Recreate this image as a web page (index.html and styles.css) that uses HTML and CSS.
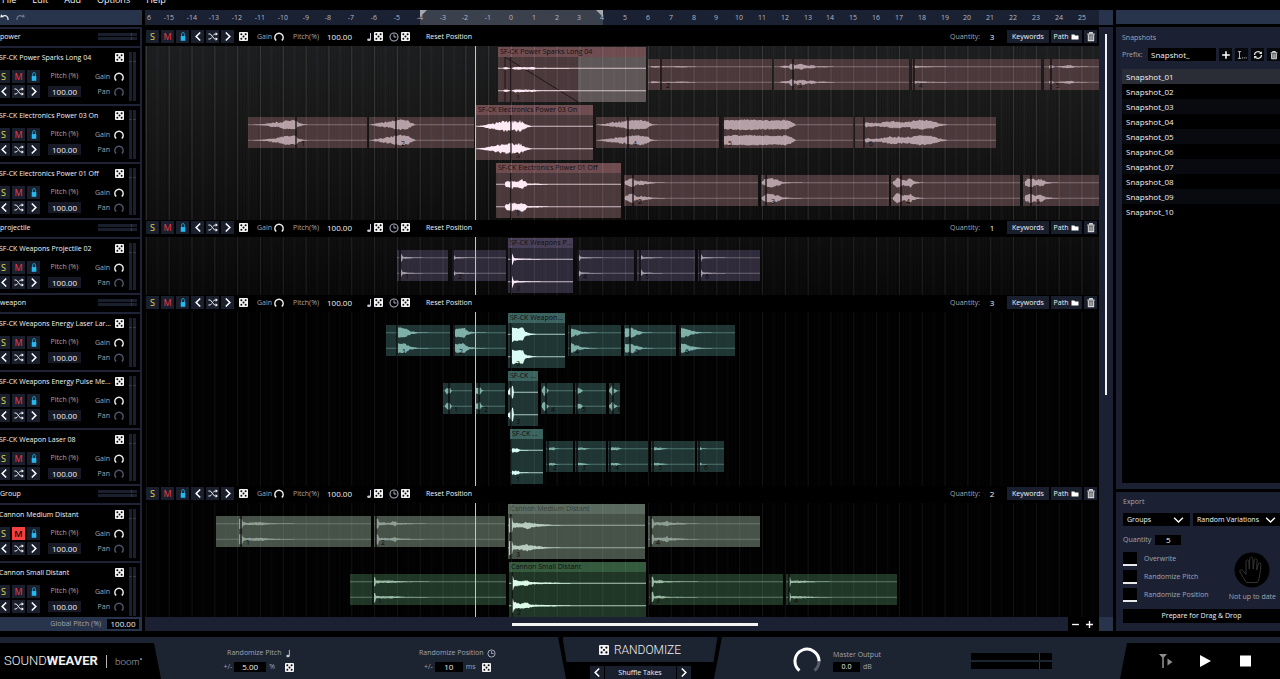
FILE: index.html
```html
<!DOCTYPE html>
<html lang="en">
<head>
<meta charset="utf-8">
<title>SoundWeaver</title>
<link rel="stylesheet" href="styles.css">
</head>
<body>
<svg class="sprite" aria-hidden="true">
  <symbol id="i-dice" viewBox="0 0 10 10"><rect width="10" height="10" rx="1" fill="#f2f2f2"/><g fill="#07080c"><circle cx="2.6" cy="2.6" r="1.1"/><circle cx="7.4" cy="2.6" r="1.1"/><circle cx="5" cy="5" r="1.1"/><circle cx="2.6" cy="7.4" r="1.1"/><circle cx="7.4" cy="7.4" r="1.1"/></g></symbol>
  <symbol id="i-lock" viewBox="0 0 10 12"><path d="M3.500 6V3.200a1.500 1.500 0 0 1 3 0V6" fill="none" stroke="#1f9cc9" stroke-width="1"/><rect x="2.500" y="5.500" width="5" height="5.200" fill="#25b9f0"/></symbol>
  <symbol id="i-prev" viewBox="0 0 10 12"><path d="M7.400 1.600 3 6l4.400 4.400" fill="none" stroke="#fff" stroke-width="1.700"/></symbol>
  <symbol id="i-next" viewBox="0 0 10 12"><path d="M2.600 1.600 7 6l-4.400 4.400" fill="none" stroke="#fff" stroke-width="1.700"/></symbol>
  <symbol id="i-shuffle" viewBox="0 0 12 12"><path d="M.5 3h2.300l5 6h2M.5 9h2.300l1.500-1.800M6.200 4.800 7.800 3h2" fill="none" stroke="#f0f0f0" stroke-width="1.200"/><path d="M9.200.9 11.900 3 9.200 5.100zM9.200 6.900 11.900 9l-2.700 2.100z" fill="#f0f0f0"/></symbol>
  <symbol id="i-knob" viewBox="0 0 10 10"><path d="M2.200 8.600A4.200 4.200 0 1 1 7.800 8.600" fill="none" stroke="currentColor" stroke-width="1.400"/></symbol>
  <symbol id="i-note" viewBox="0 0 6 10"><path d="M4.500 1v6.500" stroke="#c8cad4" fill="none"/><ellipse cx="3" cy="7.800" rx="1.900" ry="1.300" fill="#c8cad4"/></symbol>
  <symbol id="i-clock" viewBox="0 0 10 10"><circle cx="5" cy="5" r="4" fill="none" stroke="#a9adc0" stroke-width="1.100"/><path d="M5 2.300V5h2.400" fill="none" stroke="#a9adc0"/></symbol>
  <symbol id="i-folder" viewBox="0 0 8 6"><path d="M.5.500h2.800l.8 1h3.400V5.500h-7z" fill="#fff"/></symbol>
  <symbol id="i-trash" viewBox="0 0 10 12"><path d="M1 3.400h8M3.600 3V1.700h2.800V3" fill="none" stroke="#d4d4d4" stroke-width="1.300"/><path d="M2.100 4.200V10.500h5.800V4.200" fill="#5c5f66" stroke="#d4d4d4" stroke-width="1.200"/><path d="M4 5v5M6 5v5" stroke="#d4d4d4" stroke-width=".9"/></symbol>
  <symbol id="i-plus" viewBox="0 0 10 10"><path d="M5 1.200v7.600M1.200 5h7.600" stroke="#fff" stroke-width="1.500"/></symbol>
  <symbol id="i-minus" viewBox="0 0 10 10"><path d="M1.200 5h7.600" stroke="#fff" stroke-width="1.500"/></symbol>
  <symbol id="i-rename" viewBox="0 0 12 10"><path d="M1 1h4M1 9h4M3 1v8M6 8.500h1.300M8.200 8.500h1.300M10.400 8.500h1.300" stroke="#d5d5d5" fill="none"/></symbol>
  <symbol id="i-refresh" viewBox="0 0 10 10"><path d="M1.500 5A3.500 3.500 0 0 1 8 3.300M8.500 5A3.500 3.500 0 0 1 2 6.700" fill="none" stroke="#e6e6e6" stroke-width="1.200"/><path d="M8.900 1.200v2.900H6zM1.100 8.800V5.900H4z" fill="#e6e6e6"/></symbol>
  <symbol id="i-chevron" viewBox="0 0 12 8"><path d="M1.200 1.500 6 6.300l4.800-4.800" fill="none" stroke="#fff" stroke-width="1.500"/></symbol>
  <symbol id="i-undo" viewBox="0 0 12 9"><path d="M2.500 3.500c4-2.500 7.500-.8 7.200 4" fill="none" stroke="currentColor" stroke-width="1.500"/><path d="M.3 4.500 1.300.500l3.200 3.300z" fill="currentColor"/></symbol>
</svg>

<div class="app">
  <nav class="menubar">
    <button type="button">File</button><button type="button">Edit</button><button type="button">Add</button><button type="button">Options</button><button type="button">Help</button>
  </nav>

  <main class="workspace">
    <aside class="tracks">
      <div class="history">
        <button type="button" aria-label="Undo"><svg><use href="#i-undo"/></svg></button>
        <button type="button" class="redo" aria-label="Redo"><svg><use href="#i-undo"/></svg></button>
      </div>
      <div class="track-list" id="track-list"></div>
      <div class="global-pitch">
        <label for="global-pitch">Global Pitch (%)</label>
        <input id="global-pitch" value="100.00">
      </div>
    </aside>

    <section class="timeline">
      <div class="ruler" id="ruler"></div>
      <div class="corner"></div>
      <div class="lanes" id="lanes"></div>
      <div class="vscroll"><div class="vthumb"></div></div>
      <div class="hscroll">
        <div class="htrack"><div class="hthumb"></div></div>
        <button type="button" aria-label="Zoom out"><svg><use href="#i-minus"/></svg></button>
        <button type="button" aria-label="Zoom in"><svg><use href="#i-plus"/></svg></button>
      </div>
      <div class="corner"></div>
    </section>

    <aside class="side">
      <div class="side-top"></div>
      <section class="snapshots">
        <h2>Snapshots</h2>
        <div class="prefix">
          <label for="prefix">Prefix:</label>
          <input id="prefix" value="Snapshot_">
          <button type="button" aria-label="Add snapshot"><svg><use href="#i-plus"/></svg></button>
          <button type="button" aria-label="Rename snapshot"><svg><use href="#i-rename"/></svg></button>
          <button type="button" aria-label="Update snapshot"><svg><use href="#i-refresh"/></svg></button>
          <button type="button" aria-label="Delete snapshot"><svg><use href="#i-trash"/></svg></button>
        </div>
        <ul class="snapshot-list">
          <li class="current">Snapshot_01</li>
          <li>Snapshot_02</li>
          <li>Snapshot_03</li>
          <li>Snapshot_04</li>
          <li>Snapshot_05</li>
          <li>Snapshot_06</li>
          <li>Snapshot_07</li>
          <li>Snapshot_08</li>
          <li>Snapshot_09</li>
          <li>Snapshot_10</li>
        </ul>
      </section>
      <section class="export">
        <h2>Export</h2>
        <div class="selects">
          <span class="select"><select aria-label="Export source"><option>Groups</option></select><svg><use href="#i-chevron"/></svg></span>
          <span class="select"><select aria-label="Export mode"><option>Random Variations</option></select><svg><use href="#i-chevron"/></svg></span>
        </div>
        <div class="quantity"><label for="qty">Quantity</label><input id="qty" value="5"></div>
        <div class="options">
          <div class="checks">
            <label><input type="checkbox">Overwrite</label>
            <label><input type="checkbox">Randomize Pitch</label>
            <label><input type="checkbox">Randomize Position</label>
          </div>
          <div class="status">
            <svg viewBox="0 0 36 36"><circle cx="18" cy="18" r="17.500" fill="#000"/><path d="M12.500 30.500c-2.500-3-4.500-7-6.500-10.500-1-2 1.500-3 3-1.200l3 3.700V9.500c0-2 2.700-2 2.900 0l.4 7.500.5-10.500c.2-2 2.900-2 3 0l.4 10.500 1.100-9c.3-1.900 2.900-1.500 2.800.4l-.4 9.600 1.500-6c.6-1.700 3-1.200 2.700.8-.5 6-1 13-3.400 17.700z" fill="none" stroke="#343434" stroke-width="1"/></svg>
            <span>Not up to date</span>
          </div>
        </div>
        <button type="button" class="prepare">Prepare for Drag &amp; Drop</button>
      </section>
    </aside>
  </main>

  <footer class="footer">
    <div class="brand">
      <span class="name">SOUND<b>WEAVER</b></span>
      <span class="divider"></span>
      <span class="maker">boom<sup>•</sup></span>
    </div>
    <div class="randoms">
      <div class="random">
        <label for="rnd-pitch">Randomize Pitch <svg class="note"><use href="#i-note"/></svg></label>
        <div class="random-row"><span>+/-</span><input id="rnd-pitch" value="5.00"><span class="unit">%</span><button type="button" class="dice" aria-label="Randomize pitch"><svg><use href="#i-dice"/></svg></button></div>
      </div>
      <div class="random">
        <label for="rnd-pos">Randomize Position <svg class="clock"><use href="#i-clock"/></svg></label>
        <div class="random-row"><span>+/-</span><input id="rnd-pos" class="short" value="10"><span class="unit">ms</span><button type="button" class="dice" aria-label="Randomize position"><svg><use href="#i-dice"/></svg></button></div>
      </div>
    </div>
    <div class="center">
      <button type="button" class="randomize"><svg><use href="#i-dice"/></svg>RANDOMIZE</button>
      <div class="takes">
        <button type="button" aria-label="Previous mode"><svg><use href="#i-prev"/></svg></button>
        <button type="button" class="mode">Shuffle Takes</button>
        <button type="button" aria-label="Next mode"><svg><use href="#i-next"/></svg></button>
      </div>
    </div>
    <div class="master">
      <div class="output">
        <svg class="dial" viewBox="0 0 28 28"><path d="M6.500 23.500A12 12 0 1 1 26 14.500" fill="none" stroke="#fff" stroke-width="3"/><path d="M26 14.500A12 12 0 0 1 21.500 23.500" fill="none" stroke="#555b69" stroke-width="3"/></svg>
        <div class="output-text">
          <label for="master">Master Output</label>
          <div><input id="master" value="0.0"><span>dB</span></div>
        </div>
      </div>
      <div class="levels"><i></i><i></i></div>
    </div>
    <div class="transport">
      <button type="button" aria-label="Play from marker"><svg viewBox="0 0 16 16"><path d="M1 1h8L5.800 4.500V15H4.200V4.500zM9.500 5.500l5 3.500-5 3.500z" fill="#8d8d8d"/></svg></button>
      <button type="button" aria-label="Play"><svg viewBox="0 0 16 16"><path d="M2 2l11 6-11 6z" fill="#fff"/></svg></button>
      <button type="button" aria-label="Stop"><svg viewBox="0 0 16 16"><path d="M2 2.500h11v11H2z" fill="#fff"/></svg></button>
    </div>
  </footer>
</div>
<script src="app.js"></script>
</body>
</html>
```

FILE: styles.css
```css
* { box-sizing: border-box; }

:root {
  --panel: #1b2132;
  --bar: #28344b;
  --line: #1e2234;
  --button: #1a1f2e;
  --muted: #a0a5b3;
  --text: #f2f2f4;
}

body {
  margin: 0;
  background: #000;
  color: var(--text);
  font-family: "Open Sans", "Noto Sans", sans-serif;
  font-size: 7px;
  line-height: 10px;
}

button, input, select {
  font: inherit;
  color: inherit;
  border: 0;
  border-radius: 0;
  margin: 0;
  padding: 0;
  background: none;
  min-width: 0;
}

button { display: flex; align-items: center; justify-content: center; flex: none; }
svg { display: block; flex: none; }
h2 { margin: 0; font-size: 7px; font-weight: 400; color: var(--muted); }
.sprite { position: absolute; width: 0; height: 0; }

.app { height: 100vh; display: flex; flex-direction: column; overflow: hidden; }

.menubar {
  height: 10px;
  padding: 0 0 3px 2px;
  display: flex;
  align-items: flex-end;
  gap: 16px;
  overflow: hidden;
  font-size: 9px;
  line-height: 14px;
}

.workspace {
  flex: 1;
  min-height: 0;
  display: grid;
  grid-template-columns: 142px minmax(0, 1fr) 164px;
  grid-template-rows: minmax(0, 1fr);
  column-gap: 3px;
}

/* Track headers */
.tracks { display: flex; flex-direction: column; min-height: 0; overflow: hidden; }
.history { height: 15px; background: var(--bar); display: flex; align-items: center; gap: 5px; margin-bottom: 2px; flex: none; }
.history button { color: #f2f2f2; }
.history svg { width: 10px; height: 9px; }
.history .redo { color: #6f7a8e; }
.history .redo svg { transform: scaleX(-1); }
.track-list { flex: 1; min-height: 0; overflow: hidden; border-top: 2px solid var(--line); border-right: 2px solid var(--line); }
.group-head { height: 17px; padding: 0 3px 2px 0; display: flex; align-items: center; justify-content: space-between; }
.group-meter { width: 39px; display: grid; gap: 1px; }
.group-meter i { height: 3px; background: linear-gradient(90deg, var(--button) 33px, #333a4a 33px, #333a4a 34px, var(--button) 34px); }
.track {
  height: 58px;
  margin-left: -3px;
  padding: 4px 4px 3px 2px;
  border-top: 2px solid var(--line);
  display: flex;
  justify-content: space-between;
}
.track:has(+ .group-head) { border-bottom: 2px solid var(--line); }
.track-main { width: 125px; }
.track-title { display: flex; justify-content: space-between; align-items: center; height: 11px; margin-bottom: 7px; white-space: nowrap; }
.track-row { display: flex; align-items: center; height: 13px; margin: 0 0 2px -2px; }
.track-row .sq { margin-right: 2px; }
.track-row .pitch { width: 33px; height: 11px; margin-left: 6px; text-align: center; }
.track-row input.pitch { background: #171a26; font-size: 8px; }
.track-row .knob-label { flex: 1; text-align: right; color: var(--muted); padding-right: 4px; }
label.pitch { color: var(--muted); }
.meters { display: flex; gap: 1px; }
.meters i { width: 3px; background: linear-gradient(#1b2030 9px, #353b4a 9px, #353b4a 10px, #1b2030 10px); }

.sq { width: 13px; height: 13px; background: var(--button); font-size: 9px; line-height: 13px; }
.sq svg { width: 10px; height: 11px; }
.sq.solo { color: #e4d94a; }
.sq.mute { color: #ec3b44; }
.sq.mute.on { background: #f4403f; color: #180405; font-weight: 600; }
.dice svg { width: 9px; height: 9px; }
.knob { width: 10px; height: 10px; color: #eee; }
.knob.off { color: #4f566a; }

.global-pitch { height: 14px; flex: none; background: var(--bar); display: flex; align-items: center; justify-content: flex-end; gap: 6px; padding-right: 3px; color: var(--muted); }
.global-pitch input { width: 32px; height: 10px; background: #000; color: var(--text); text-align: center; font-size: 8px; }

/* Timeline */
.timeline {
  display: grid;
  grid-template-columns: minmax(0, 1fr) 14px;
  grid-template-rows: 15px minmax(0, 1fr) 14px;
  min-height: 0;
}
.ruler { position: relative; overflow: hidden; background: #192133; margin: 0; color: #b3b8c4; font-size: 7px; line-height: 15px; }
.ruler span { position: absolute; top: 0; width: 20px; margin-left: -10px; text-align: center; }
.ruler .range { position: absolute; top: 0; bottom: 0; background: #3b404d; }
.ruler .range::before, .ruler .range::after { content: ""; position: absolute; top: 0; width: 7px; height: 7px; background: #a5a7ad; }
.ruler .range::before { left: 0; clip-path: polygon(0 0, 100% 0, 0 100%); }
.ruler .range::after { right: 0; clip-path: polygon(0 0, 100% 0, 100% 100%); }
.corner { background: var(--bar); }
.vscroll { background: var(--panel); margin-top: 2px; padding: 7px 6px 0; }
.vthumb { height: 62%; background: #f0f1f5; }
.hscroll { background: #000; display: flex; align-items: stretch; padding-right: 3px; }
.hscroll button { width: 14px; }
.hscroll button svg { width: 9px; height: 9px; }
.htrack { flex: 1; background: var(--panel); display: flex; align-items: center; }
.hthumb { width: 246px; height: 3px; margin-left: 367px; background: #f4f4f4; }

.lanes { position: relative; overflow: hidden; padding-top: 4px; }
.toolbar { position: relative; z-index: 3; height: 17px; background: #000; padding: 0 2px 2px 1px; display: flex; align-items: center; gap: 2px; }
.toolbar .dice { margin-left: 3px; }
.toolbar .label { color: var(--muted); }
.toolbar .gain { width: 15px; margin-left: 7px; }
.toolbar .pitch-label { width: 32px; margin-left: 7px; }
.toolbar .pitch-value { width: 32px; height: 13px; font-size: 8px; }
.toolbar .note { width: 6px; height: 10px; margin-left: 5px; }
.toolbar .clock { width: 10px; height: 10px; margin-left: 4px; }
.toolbar .note + .dice, .toolbar .clock + .dice { margin-left: 0; }
.toolbar .reset { margin-left: 14px; }
.toolbar .quantity-label { margin-left: auto; color: var(--muted); }
.toolbar .quantity-value { width: 20px; text-align: center; font-size: 8px; }
.toolbar .wide { height: 13px; background: var(--button); gap: 3px; }
.toolbar .keywords { width: 42px; margin-left: 3px; }
.toolbar .path { width: 31px; }
.toolbar .path svg { width: 8px; height: 6px; }

.lane { position: relative; height: 58px; overflow: hidden; }
.group-lanes { position: relative; }
.shade-power { background: linear-gradient(#1b1c1d, #131313 60%, #0c0c0c); }
.shade-projectile { background: linear-gradient(#0d0d0e, #070707); }
.shade-weapon { background: #010102; }
.grid { position: absolute; inset: 0; width: 100%; height: 100%; z-index: 2; pointer-events: none; }
.shade-projectile .grid { opacity: .75; }
.shade-weapon .grid { opacity: .55; }
.playhead { position: absolute; top: 19px; bottom: 0; left: 330px; width: 1px; background: #c4c4c4; z-index: 2; }

.clip { position: absolute; top: 13px; height: 31px; background: var(--body); overflow: hidden; }
.clip.active { top: 1px; height: 55px; display: flex; flex-direction: column; }
.clip svg { width: 100%; height: 31px; color: var(--wave); }
.clip.active svg { height: 45px; color: var(--hot); }
.clip-title { height: 10px; flex: none; background: var(--head); color: #120c0e; padding-left: 2px; white-space: nowrap; overflow: hidden; }
.clip-number { position: absolute; bottom: 0; color: #0c090a; line-height: 9px; }
.power { --body: #49373a; --head: #6d4a4e; --wave: #b59fa6; --hot: #fdeaf4; }
.projectile { --body: #2f2a39; --head: #463e56; --wave: #a29ba9; --hot: #fbeefa; }
.weapon { --body: #1e3533; --head: #3a625e; --wave: #7eb0a8; --hot: #d9fbf5; }
.cannon-m { --body: #465148; --head: #5b6a5f; --wave: #8e9e95; --hot: #b7cbc1; }
.cannon-m .clip-title { color: #333e37; }
.cannon-s { --body: #1f3626; --head: #345a3e; --wave: #9bbba5; --hot: #ddfbe9; }

/* Side panel */
.side { display: flex; flex-direction: column; min-height: 0; overflow: hidden; }
.side-top { height: 14px; flex: none; background: var(--bar); margin-bottom: 3px; }
.snapshots { flex: 1; min-height: 0; background: var(--panel); padding: 6px 0 6px 6px; display: flex; flex-direction: column; }
.prefix { display: flex; align-items: center; gap: 3px; margin: 5px 0 8px; color: var(--muted); }
.prefix label { width: 23px; flex: none; }
.prefix input { width: 68px; flex: none; height: 13px; background: #000; color: var(--text); padding-left: 3px; }
.prefix button { width: 13px; height: 13px; background: #07080c; }
.prefix svg { width: 10px; height: 10px; }
.snapshot-list { flex: 1; margin: 0; padding: 0; list-style: none; background: #000; }
.snapshot-list li { height: 15px; line-height: 15px; padding-left: 4px; font-size: 8px; }
.prefix input { font-size: 8px; }
.snapshot-list li:nth-child(odd) { background: #090a0f; }
.snapshot-list li.current { background: #2a2d36; }

.export { background: var(--panel); margin-top: 3px; padding: 5px 0 8px 7px; flex: none; }
.selects { display: grid; grid-template-columns: 67px 1fr; gap: 3px; margin: 6px 0 9px; }
.select { position: relative; }
.select select { appearance: none; width: 100%; height: 13px; background: #000; padding-left: 4px; display: block; font-weight: 500; }
.select svg { position: absolute; right: 6px; top: 3px; width: 11px; height: 8px; pointer-events: none; }
.select + .select svg { right: 4px; }
.quantity { display: flex; align-items: center; gap: 4px; color: var(--muted); margin-bottom: 7px; }
.quantity input { width: 26px; height: 10px; background: #000; color: var(--text); text-align: center; font-size: 8px; }
.options { display: flex; justify-content: space-between; padding-right: 4px; }
.checks { display: grid; gap: 4px; color: var(--muted); }
.checks label { display: flex; align-items: center; gap: 7px; }
.checks input { appearance: none; width: 14px; height: 14px; background: #000; border-bottom: 2px solid #e8e8e8; }
.status { display: flex; flex-direction: column; align-items: center; justify-content: space-between; color: var(--muted); }
.status svg { width: 36px; height: 36px; }
.prepare { width: 100%; height: 14px; background: #000; margin-top: 7px; font-weight: 500; }

/* Footer */
.footer {
  height: 42px;
  flex: none;
  margin-top: 6px;
  background: #1c2331;
  display: grid;
  grid-template-columns: 161px minmax(0, 397fr) 164px minmax(0, 398fr) 160px;
}
.footer label, .footer span { color: var(--muted); }
.footer input { height: 10px; background: #000; text-align: center; }
.brand { margin-top: 6px; background: #000; clip-path: polygon(0 0, 154px 0, 100% 100%, 0 100%); display: flex; align-items: center; padding-left: 4px; gap: 8px; }
.footer .name { color: #f0f0f0; font: 300 13px/16px Roboto, sans-serif; }
.brand b { font-weight: 700; }
.brand .divider { width: 1px; height: 13px; background: #b5b5b5; }
.footer .maker { font: 300 10px/12px Lato, sans-serif; color: #c0c0c8; }
.brand sup { font-size: 5px; line-height: 1px; }
.randoms { display: flex; justify-content: space-around; padding-top: 11px; }
.random { display: flex; flex-direction: column; align-items: center; gap: 4px; }
.random label { display: flex; align-items: center; gap: 3px; height: 10px; }
.random .note { width: 6px; height: 9px; }
.random .clock { width: 9px; height: 9px; }
.random-row { display: flex; align-items: center; gap: 2px; }
.random-row input { width: 32px; font-size: 8px; }
.random-row input.short { width: 28px; }
.random-row .unit { width: 15px; padding-left: 1px; }
.center { background: #000; clip-path: polygon(0 0, 100% 0, 156px 100%, 8px 100%); display: flex; flex-direction: column; align-items: center; justify-content: space-between; }
.randomize { width: 155px; height: 25px; background: #1c2331; clip-path: polygon(0 0, 100% 0, 151px 100%, 4px 100%); gap: 5px; font: 300 12px/16px Roboto, sans-serif; }
.randomize svg { width: 10px; height: 10px; }
.takes { display: flex; gap: 1px; height: 13px; }
.takes button { width: 14px; height: 13px; background: var(--button); }
.takes .mode { width: 71px; }
.takes svg { width: 10px; height: 11px; }
.master { display: flex; align-items: center; justify-content: space-between; padding: 6px 68px 0 71px; }
.output { display: flex; align-items: center; gap: 12px; }
.dial { width: 28px; height: 28px; }
.output-text { display: grid; gap: 2px; }
.output-text div { display: flex; gap: 3px; }
.output-text input { width: 27px; }
.levels { width: 81px; display: grid; gap: 2px; }
.levels i { height: 7px; background: linear-gradient(90deg, #000 68px, #333843 68px, #333843 69px, #000 69px); }
.transport { margin-top: 6px; background: #000; clip-path: polygon(7px 0, 100% 0, 100% 100%, 0 100%); display: flex; align-items: center; padding-left: 38px; gap: 24px; }
.transport svg { width: 16px; height: 16px; }
```

FILE: app.js
```js
const ORIGIN = 145;      // session offset of the lane area's left edge
const ZERO = 511 - ORIGIN;
const UNIT = 22.82;      // pixels per ruler unit

// clip: [start, end, marker, envelope points (x, level)]
const groups = [
  { name: 'power', shade: 'power', tracks: [
    { name: 'SF-CK Power Sparks Long 04', tone: 'power', active: 0, title: 'SF-CK Power Sparks Long 04', fade: true, clips: [
      [498, 646, 511, [503,.02, 505,.2, 508,.15, 509,.02, 512,.05, 515,.25, 520,.2, 528,.15, 534,.2, 536,.06, 560,.04, 575,0]],
      [648, 772, 661, [651,.15, 655,.2, 661,.1, 670,.08, 680,.15, 685,.15, 698,0]],
      [774, 909, 793, [779,.02, 785,.3, 789,.2, 791,.7, 793,.7, 795,.3, 798,.5, 802,.6, 808,.3, 813,.4, 816,.12, 825,.15, 836,0]],
      [912, 1041, 914, [914,.3, 918,.2, 926,.12, 940,.05, 952,0]],
      [1044, 1110, 1051, [1049,.3, 1052,.3, 1055,0, 1061,.15, 1070,.35, 1075,.1, 1092,0]]] },
    { name: 'SF-CK Electronics Power 03 On', tone: 'power', active: 2, title: 'SF-CK Electronics Power 03 On', clips: [
      [248, 367, 296, [252,0, 265,.2, 275,.5, 285,.85, 296,.9, 298,.5, 303,.15, 308,0]],
      [369, 474, 396, [370,0, 380,.45, 395,.85, 400,1, 408,.85, 411,.5, 416,0]],
      [476, 593, 511, [477,0, 490,.35, 505,.75, 520,.8, 525,.35, 532,0]],
      [596, 719, 628, [597,0, 612,.5, 628,.85, 640,.95, 648,.7, 652,.15, 658,0]],
      [722, 853, 723, [724,.9, 735,1, 750,1, 775,.85, 785,.95, 792,.7, 796,0]],
      [855, 996, 864, [864,.1, 866,.5, 878,.35, 892,.8, 905,.65, 920,.95, 932,.8, 941,.3, 948,0]]] },
    { name: 'SF-CK Electronics Power 01 Off', tone: 'power', active: 0, title: 'SF-CK Electronics Power 01 Off', clips: [
      [496, 621, 511, [505,.2, 507,.5, 512,.65, 516,.4, 522,.7, 525,.5, 528,.12, 538,.1, 550,0]],
      [624, 758, 633, [625,.4, 629,.8, 633,.9, 637,.4, 642,.5, 648,.25, 655,.1, 668,0]],
      [761, 889, 766, [762,.3, 766,.85, 772,.85, 778,.7, 782,.2, 790,.1, 806,0]],
      [891, 1020, 901, [893,.3, 897,1, 904,.6, 911,.85, 914,.3, 920,.1, 925,0]],
      [1023, 1110, 1031, [1025,.5, 1029,.9, 1036,.7, 1042,.8, 1046,.25, 1052,.1, 1060,0]]] }
  ] },
  { name: 'projectile', shade: 'projectile', tracks: [
    { name: 'SF-CK Weapons Projectile 02', tone: 'projectile', active: 2, title: 'SF-CK Weapons P...', clips: [
      [397, 448, 400, [401,.9, 402,.7, 403,.25, 410,.12, 425,0]],
      [452, 506, 453, [454,.5, 456,.2, 465,.1, 478,0]],
      [508, 573, 511, [512,.9, 513,.6, 514,.2, 520,.1, 545,0]],
      [577, 634, 578, [579,.8, 580,.5, 581,.2, 590,.1, 606,0]],
      [637, 695, 640, [641,.8, 642,.5, 643,.2, 652,.1, 665,0]],
      [698, 760, 700, [701,.9, 702,.5, 703,.2, 712,.1, 730,0]]] }
  ] },
  { name: 'weapon', shade: 'weapon', tracks: [
    { name: 'SF-CK Weapons Energy Laser Lar...', tone: 'weapon', active: 2, title: 'SF-CK Weapon...', clips: [
      [386, 450, 397, [398,1, 406,.85, 411,.3, 418,.1, 432,0]],
      [453, 506, 454, [455,.8, 464,1, 469,.3, 476,.1, 490,0]],
      [508, 565, 511, [512,1, 518,.85, 523,.9, 525,.4, 530,.15, 537,0]],
      [568, 621, 570, [571,1, 575,.7, 582,.25, 590,.1, 600,0]],
      [624, 676, 630, [625,.9, 629,.8, 631,1, 638,.5, 643,.12, 655,0]],
      [679, 735, 680, [681,1, 687,.75, 695,.3, 701,.1, 715,0]]] },
    { name: 'SF-CK Weapons Energy Pulse Me...', tone: 'weapon', active: 2, title: 'SF-CK ...', clips: [
      [443, 472, 449, [445,.2, 447,.7, 450,.7, 452,0]],
      [475, 505, 479, [476,.7, 480,.8, 482,.2, 484,0]],
      [508, 538, 511, [508,.3, 510,.6, 512,.9, 513,.9, 514,0]],
      [541, 573, 546, [542,.5, 544,1, 547,.6, 549,0]],
      [575, 606, 577, [577,.7, 581,.4, 583,0]],
      [609, 620, 613, [609,.2, 612,1, 615,.4, 618,0]]] },
    { name: 'SF-CK Weapon Laser 08', tone: 'weapon', active: 0, title: 'SF-CK ...', clips: [
      [510, 543, 511, [512,.3, 518,.3, 520,.08, 530,0]],
      [546, 573, 548, [549,.25, 554,.3, 556,.05, 562,0]],
      [575, 606, 577, [578,.3, 583,.25, 590,0]],
      [608, 648, 610, [611,.3, 617,.3, 622,0]],
      [651, 695, 653, [654,.35, 660,.25, 668,0]],
      [697, 724, 699, [700,.4, 702,.1, 708,0]]] }
  ] },
  { name: 'Group', shade: 'weapon', tracks: [
    { name: 'Cannon Medium Distant', tone: 'cannon-m', muted: true, active: 2, title: 'Cannon Medium Distant', clips: [
      [216, 371, 241, [239,1, 242,1, 243,.45, 247,.25, 262,.35, 268,.15, 280,.08, 300,0]],
      [374, 505, 376, [376,1, 378,1, 379,.35, 390,.2, 395,.6, 397,.2, 410,.1, 430,0]],
      [508, 645, 511, [509,1, 512,1, 513,.4, 520,.3, 527,.55, 533,.3, 540,.2, 552,.05, 565,0]],
      [648, 760, 651, [651,1, 653,1, 654,.35, 657,.3, 665,.4, 667,.7, 669,.3, 680,.2, 690,.05, 705,0]]] },
    { name: 'Cannon Small Distant', tone: 'cannon-s', active: 1, title: 'Cannon Small Distant', clips: [
      [350, 506, 373, [374,1, 375,1, 376,.3, 390,.25, 405,.1, 435,0]],
      [509, 646, 512, [512,1, 513,1, 514,.5, 520,.35, 526,.45, 533,.15, 545,.12, 575,0]],
      [649, 783, 651, [651,1, 653,1, 654,.25, 660,.35, 665,.15, 675,.1, 705,0]],
      [786, 897, 789, [789,1, 790,1, 791,.25, 800,.25, 815,.1, 835,0]]] }
  ] }
];

let seed = 7;
const rand = () => (seed = (seed * 16807) % 2147483647) / 2147483647;
const icon = (id, cls = '') => `<svg class="${cls}"><use href="#i-${id}"/></svg>`;
const square = (label, content, cls = '') => `<button type="button" class="sq ${cls}" aria-label="${label}">${content}</button>`;

function level(points, x) {
  for (let i = 0; i + 3 < points.length; i += 2) {
    const [x0, a0, x1, a1] = points.slice(i, i + 4);
    if (x >= x0 && x <= x1) return a0 + (a1 - a0) * (x - x0) / (x1 - x0);
  }
  return 0;
}

function channel(points, start, centre, reach) {
  const first = points[0];
  const last = points[points.length - 2];
  let top = '';
  let bottom = '';
  for (let x = first; x <= last; x += 1) {
    const a = level(points, x) * reach;
    const jitter = a > 0.8 * reach ? 0.25 : 0.5;
    top += `L${x - start} ${(centre - a * (1 - jitter * rand())).toFixed(1)}`;
    bottom = `L${x - start} ${(centre + a * (1 - jitter * rand())).toFixed(1)}` + bottom;
  }
  return `M${first - start} ${centre}${top}${bottom}Z`;
}

function clipMarkup(track, clip, index) {
  const [start, end, marker, points] = clip;
  const active = index === track.active;
  const w = end - start;
  const h = active ? 45 : 31;
  const q = h / 4;
  const m = marker - start;
  const fade = track.fade && active
    ? `<rect x="80" width="${w - 80}" height="${h}" fill="#5d5556"/><path d="M7 0L80 ${h}M7 0V${h}" stroke="#1c1315" fill="none"/>` : '';
  return `<div class="clip ${track.tone} ${active ? 'active' : ''}" style="left:${start - ORIGIN}px;width:${w}px">
    ${active ? `<div class="clip-title">${track.title}</div>` : ''}
    <svg viewBox="0 0 ${w} ${h}" preserveAspectRatio="none">
      ${fade}
      <path d="M0 ${q}H${w}M0 ${3 * q}H${w}" stroke="currentColor" stroke-opacity="${active ? 0.75 : 0.5}"/>
      <path d="${channel(points, start, q, q * 0.72)}${channel(points, start, 3 * q, q * 0.72)}" fill="currentColor"/>
      <path d="M${m} 0V${h}" stroke="#0b090a" stroke-width="1.3"/>
    </svg>
    <span class="clip-number" style="left:${m + 5}px">${index + 1}</span>
  </div>`;
}

const pads = (muted) => square('Solo', 'S', 'solo') + square('Mute', 'M', 'mute' + (muted ? ' on' : '')) + square('Lock', icon('lock'));
const steps = square('Previous take', icon('prev')) + square('Shuffle', icon('shuffle')) + square('Next take', icon('next'));
const dice = '<button type="button" class="dice" aria-label="Randomize">' + icon('dice') + '</button>';

let n = 0;
document.getElementById('track-list').innerHTML = groups.map((g) => `
  <div class="group-head"><span>${g.name}</span><span class="group-meter"><i></i><i></i></span></div>
  ${g.tracks.map((t) => `
  <div class="track">
    <div class="track-main">
      <div class="track-title"><span>${t.name}</span>${dice}</div>
      <div class="track-row">${pads(t.muted)}<label class="pitch" for="pitch-${++n}">Pitch (%)</label><span class="knob-label">Gain</span>${icon('knob', 'knob')}</div>
      <div class="track-row">${steps}<input class="pitch" id="pitch-${n}" value="100.00"><span class="knob-label">Pan</span>${icon('knob', 'knob off')}</div>
    </div>
    <div class="meters"><i></i><i></i></div>
  </div>`).join('')}`).join('');

const grid = `<svg class="grid"><rect width="100%" height="100%" fill="url(#beat)"/></svg>`;

document.getElementById('lanes').innerHTML = `
  <svg class="sprite" aria-hidden="true"><defs><pattern id="beat" x="${ZERO}" width="${UNIT}" height="8" patternUnits="userSpaceOnUse">
    <path d="M.5 0V8" stroke="#fff" stroke-opacity=".13"/>
    <path d="M4 0V8M7 0V8M10 0V8M13 0V8M16 0V8M19 0V8" stroke="#fff" stroke-opacity=".025"/>
    <path d="M11.500 0V8" stroke="#fff" stroke-opacity=".04"/>
  </pattern></defs></svg>` + groups.map((g, i) => `
  <div class="toolbar">
    ${pads()}${steps}${dice}
    <span class="label gain">Gain</span>${icon('knob', 'knob')}
    <label class="label pitch-label" for="group-${i}">Pitch(%)</label><input class="pitch-value" id="group-${i}" value="100.00">
    ${icon('note', 'note')}${dice}${icon('clock', 'clock')}${dice}
    <button type="button" class="reset">Reset Position</button>
    <span class="quantity-label">Quantity:</span><span class="quantity-value">${g.tracks.length}</span>
    <button type="button" class="wide keywords">Keywords</button>
    <button type="button" class="wide path">Path ${icon('folder')}</button>
    ${square('Delete group', icon('trash'))}
  </div>
  <div class="group-lanes shade-${g.shade}">
    ${g.tracks.map((t) => `<div class="lane">${t.clips.map((c, k) => clipMarkup(t, c, k)).join('')}</div>`).join('')}
    ${grid}
  </div>`).join('') + '<div class="playhead"></div>';

let marks = `<div class="range" style="left:${420 - ORIGIN}px;width:183px"></div><span style="left:4px">6</span>`;
for (let v = -15; v <= 25; v += 1) marks += `<span style="left:${Math.round(ZERO + v * UNIT)}px">${v}</span>`;
document.getElementById('ruler').innerHTML = marks;
```
